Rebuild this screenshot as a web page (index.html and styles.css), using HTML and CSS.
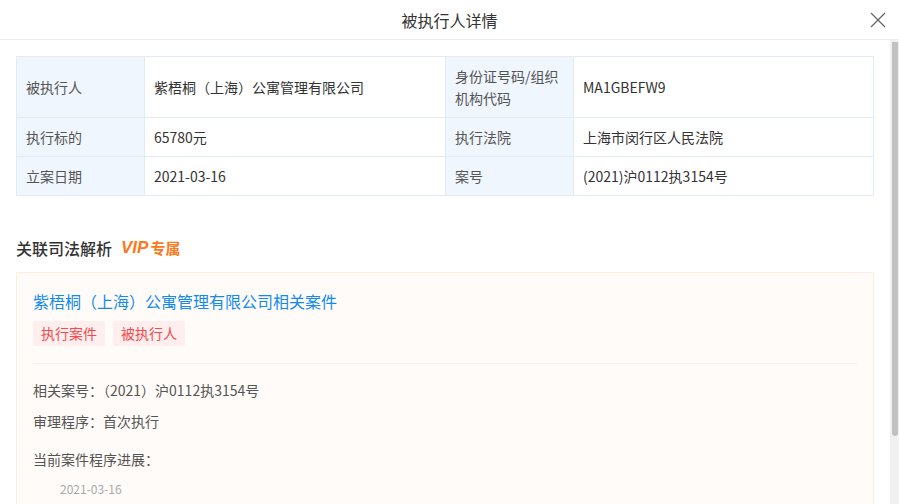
FILE: index.html
```html
<!DOCTYPE html>
<html lang="zh-cn">
<head>
    <meta charset="UTF-8">
    <meta name="viewport" content="width=device-width, initial-scale=1.0">
    <title>被执行人详情</title>
    <link rel="stylesheet" href="styles.css">
</head>
<body>

    <div class="modal">
        <div class="modal-header">
            <span class="modal-title">被执行人详情</span>
            <span class="close">
                <svg width="16" height="16" viewBox="0 0 16 16"><path d="M1 1L15 15M15 1L1 15" stroke="#666" stroke-width="1.3" fill="none"/></svg>
            </span>
        </div>

        <div class="modal-body">
            <div class="content">
                <table class="detail">
                    <tr class="tall">
                        <td class="lbl">被执行人</td>
                        <td class="val">紫梧桐（上海）公寓管理有限公司</td>
                        <td class="lbl">身份证号码/组织<br>机构代码</td>
                        <td class="val">MA1GBEFW9</td>
                    </tr>
                    <tr>
                        <td class="lbl">执行标的</td>
                        <td class="val">65780元</td>
                        <td class="lbl">执行法院</td>
                        <td class="val">上海市闵行区人民法院</td>
                    </tr>
                    <tr>
                        <td class="lbl">立案日期</td>
                        <td class="val">2021-03-16</td>
                        <td class="lbl">案号</td>
                        <td class="val">(2021)沪0112执3154号</td>
                    </tr>
                </table>

                <!-- 关联司法解析 -->
                <div class="section-title">
                    关联司法解析
                    <span class="vip"><i>VIP</i>专属</span>
                </div>

                <div class="case-card">
                    <div class="case-top">
                        <div class="case-name">紫梧桐（上海）公寓管理有限公司相关案件</div>
                        <div class="tags">
                            <span class="tag">执行案件</span>
                            <span class="tag">被执行人</span>
                        </div>
                    </div>
                    <div class="case-info">
                        <p>相关案号：（2021）沪0112执3154号</p>
                        <p>审理程序：首次执行</p>
                        <p class="progress-title">当前案件程序进展：</p>
                        <p class="progress-date">2021-03-16</p>
                    </div>
                </div>
            </div>

            <div class="scrollbar">
                <div class="thumb"></div>
            </div>
        </div>
    </div>

</body>
</html>
```

FILE: styles.css
```css
* { box-sizing: border-box; }
html, body { margin: 0; padding: 0; height: 100%; overflow: hidden; }
body { font-family: "Noto Sans CJK SC", "Noto Sans", sans-serif; color: #333; background: #fff; font-size: 14px; }

.modal { height: 504px; display: flex; flex-direction: column; }
.modal-header { height: 40px; flex: none; border-bottom: 1px solid #eceff3; display: flex; align-items: center; justify-content: center; position: relative; }
.modal-title { font-size: 16px; color: #333; line-height: 22px; }
.close { position: absolute; right: 13px; top: 12px; width: 16px; height: 16px; }
.close svg { display: block; }

.modal-body { flex: 1; display: flex; min-height: 0; }
.content { flex: 1; padding: 16px 16px 0 16px; overflow: hidden; }
.scrollbar { width: 9px; flex: none; background: #f1f1f1; padding: 2px 1px 0 2px; }
.thumb { height: 394px; background: #c1c1c1; border-radius: 0 0 3px 3px; }

.detail { width: 100%; border-collapse: collapse; table-layout: fixed; }
.detail td { border: 1px solid #e3ecf5; padding: 8px 9px; line-height: 22px; font-size: 14px; vertical-align: middle; }
.detail .lbl { width: 128px; background: #f0f6fd; color: #555; }
.detail td:nth-child(2) { width: 301px; }
.detail .val { color: #333; }

.section-title { margin-top: 40px; font-size: 16px; font-weight: 500; line-height: 24px; color: #333; display: flex; align-items: center; }
.vip { margin-left: 9px; color: #fb7a1b; font-size: 15px; font-weight: bold; display: inline-flex; align-items: center; }
.vip i { font-size: 17px; font-weight: 900; font-style: italic; margin-right: 2px; font-family: "Liberation Sans", sans-serif; }

.case-card { margin-top: 12px; background: #fffbf8; border: 1px solid #fdeee3; border-bottom: none; padding: 0 16px; height: 300px; }
.case-top { padding: 16px 0 17px; border-bottom: 1px solid #fbeee4; }
.case-name { font-size: 16px; line-height: 24px; color: #128bed; }
.tags { margin-top: 8px; display: flex; gap: 8px; }
.tag { background: #feeeee; color: #f5494d; font-size: 14px; line-height: 25px; padding: 0 8px; border-radius: 2px; }

.case-info { padding-top: 15px; }
.case-info p { margin: 0 0 9px 0; line-height: 22px; font-size: 14px; color: #555; }
.case-info .progress-title { margin-top: 16px; margin-bottom: 8px; }
.case-info .progress-date { padding-left: 27px; font-size: 12px; color: #aaa; }
```
